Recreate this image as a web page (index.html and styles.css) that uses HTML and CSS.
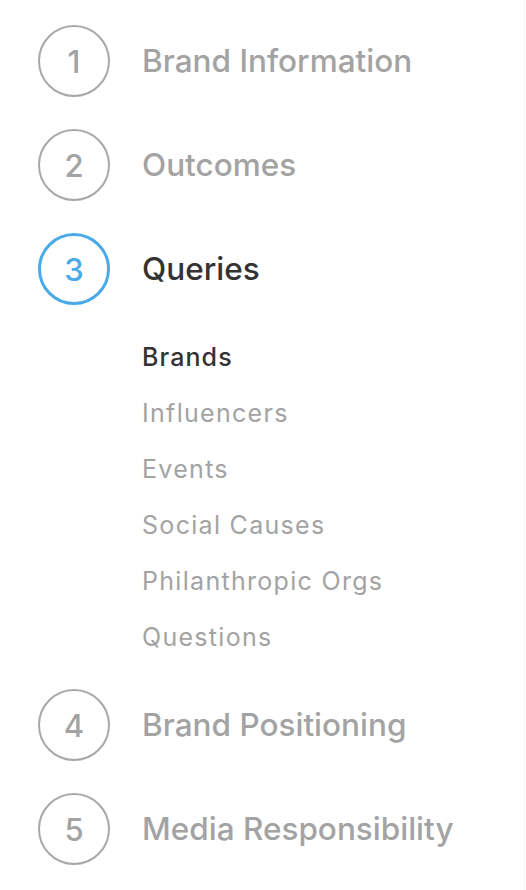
FILE: index.html
```html
<!DOCTYPE html>
<html lang="en">
<head>
<meta charset="utf-8">
<title>Steps</title>
<link rel="stylesheet" href="styles.css">
</head>
<body>
<nav class="sidebar">
  <div class="step">
    <div class="circle">1</div>
    <div class="label">Brand Information</div>
  </div>
  <div class="step">
    <div class="circle">2</div>
    <div class="label">Outcomes</div>
  </div>
  <div class="step active">
    <div class="circle">3</div>
    <div class="label">Queries</div>
  </div>
  <ul class="sub">
    <li class="current">Brands</li>
    <li>Influencers</li>
    <li>Events</li>
    <li>Social Causes</li>
    <li>Philanthropic Orgs</li>
    <li>Questions</li>
  </ul>
  <div class="step">
    <div class="circle">4</div>
    <div class="label">Brand Positioning</div>
  </div>
  <div class="step">
    <div class="circle">5</div>
    <div class="label">Media Responsibility</div>
  </div>
</nav>
</body>
</html>
```
FILE: styles.css
```css
html, body {
  margin: 0;
  padding: 0;
  background: #ffffff;
}
body {
  font-family: Inter, "Noto Sans", sans-serif;
}
.sidebar {
  box-sizing: border-box;
  width: 525px;
  min-height: 890px;
  border-right: 1px solid #f3f3f3;
  padding: 25px 0 0 38px;
  display: flex;
  flex-direction: column;
  gap: 32px;
}
.step {
  display: flex;
  align-items: center;
  gap: 32px;
}
.circle {
  box-sizing: border-box;
  width: 72px;
  height: 72px;
  border-radius: 50%;
  border: 2px solid #a8a8a8;
  display: flex;
  align-items: center;
  justify-content: center;
  color: #a3a3a3;
  font-size: 31px;
  font-weight: 500;
  flex: none;
}
.label {
  font-size: 31.5px;
  font-weight: 500;
  color: #a3a3a3;
  line-height: 1;
}
.step.active .circle {
  border: 3px solid #4aaae9;
  color: #4aaae9;
}
.step.active .label {
  color: #333333;
}
.sub {
  list-style: none;
  margin: 0;
  padding: 0 0 0 104px;
  display: flex;
  flex-direction: column;
  gap: 16px;
}
.sub li {
  font-size: 25px;
  line-height: 40px;
  letter-spacing: 1.3px;
  color: #a3a3a3;
  font-weight: 400;
}
.sub li.current {
  color: #333333;
  font-weight: 500;
  letter-spacing: 1.1px;
}
```
